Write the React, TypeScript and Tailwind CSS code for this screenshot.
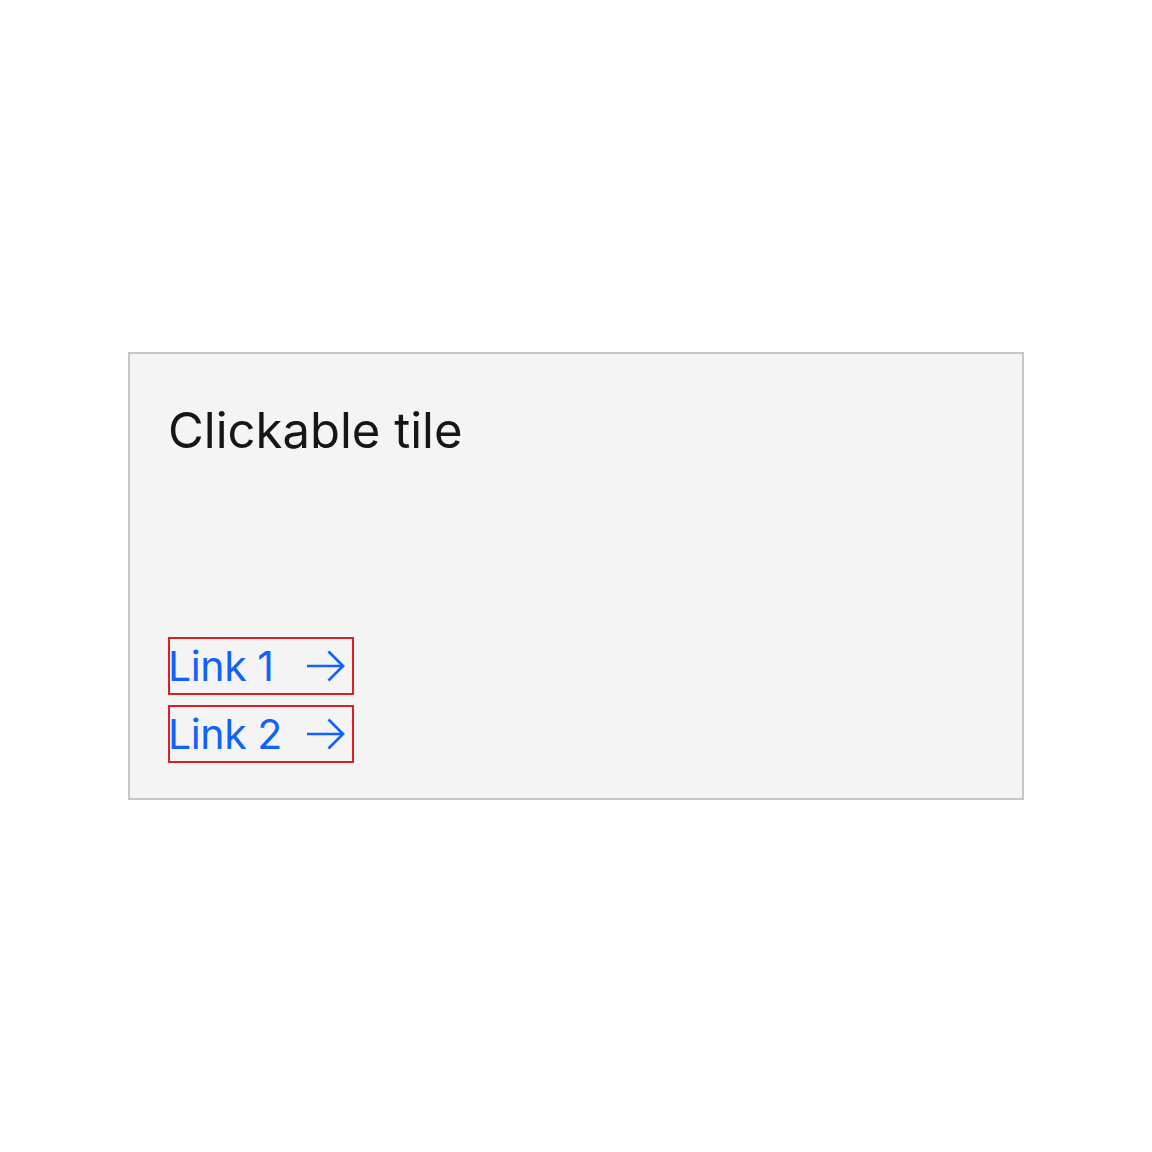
import React from 'react';

type TileLinkProps = {
  label: string;
};

function ArrowRight() {
  return (
    <svg width="40" height="34" viewBox="0 0 40 34" fill="none" aria-hidden="true">
      <path d="M1 17H37" stroke="#0f62fe" strokeWidth="2.7" />
      <path d="M22.5 2.5L37 17L22.5 31.5" stroke="#0f62fe" strokeWidth="2.7" strokeLinejoin="miter" />
    </svg>
  );
}

function TileLink({ label }: TileLinkProps) {
  return (
    <a
      href="#"
      className="flex h-[58px] w-[186px] items-center border-2 border-[#da1e28] pr-[6px] text-[41px] leading-[54px] text-[#0f62fe] no-underline"
    >
      <span className="-ml-[2px] tracking-[-0.4px]">{label}</span>
      <span className="ml-auto flex items-center">
        <ArrowRight />
      </span>
    </a>
  );
}

export default function App() {
  return (
    <div
      className="min-h-[1152px] bg-white pl-[128px] pt-[352px]"
      style={{ fontFamily: 'Inter, "Noto Sans", sans-serif' }}
    >
      <div className="flex h-[448px] w-[896px] flex-col border-2 border-[#c6c6c6] bg-[#f4f4f4] pl-[38px] pr-[40px] pt-[47px] pb-[35px]">
        <h3 className="text-[49px] font-normal leading-[60px] text-[#161616]">Clickable tile</h3>
        <div className="mt-auto flex flex-col gap-[10px]">
          <TileLink label="Link 1" />
          <TileLink label="Link 2" />
        </div>
      </div>
    </div>
  );
}
